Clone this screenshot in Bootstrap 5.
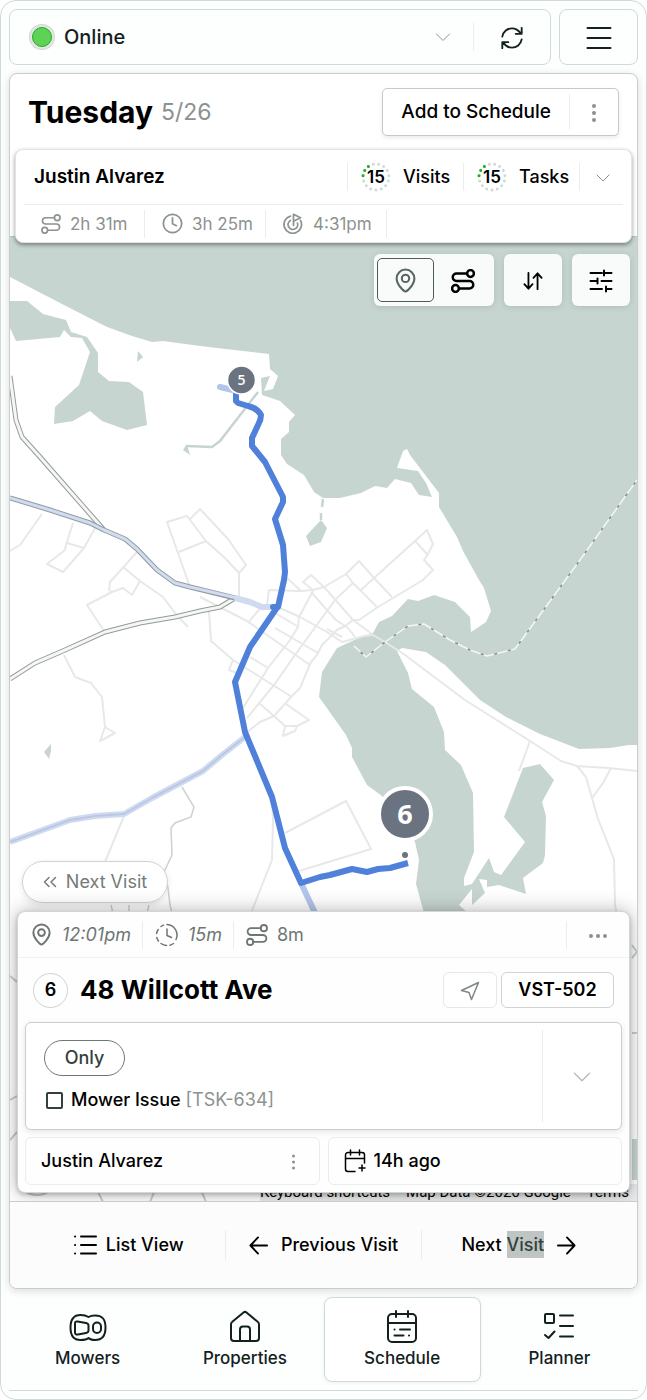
<!DOCTYPE html>
<html lang="en">
<head>
<meta charset="utf-8">
<meta name="viewport" content="width=device-width, initial-scale=1">
<title>Schedule</title>
<link href="https://cdn.jsdelivr.net/npm/bootstrap@5.3.0/dist/css/bootstrap.min.css" rel="stylesheet">
<style>
  :root { --ink: #13211d; --soft: #8b9290; --line: #ececec; --frame: #cddad6; --water: #c7d5d1; }
  body { font-family: Inter, "Liberation Sans", sans-serif; font-size: 18px; line-height: 24px; color: #000; background: #fff; }
  .shell { min-height: 100vh; border: 1px solid var(--frame); border-radius: 16px; background: #fdfefe; padding: 8px; gap: 8px; }
  svg.ic { fill: none; stroke: currentColor; stroke-width: 2; stroke-linecap: round; stroke-linejoin: round; flex: none; }
  .plain { background: none; border: 0; padding: 0; color: inherit; font-weight: 500; }
  .fw-mid { font-weight: 500; }
  .text-soft { color: var(--soft); }
  .vline { width: 1px; background: var(--line); align-self: center; height: 28px; flex: none; }

  .topbox { border: 1px solid var(--frame); border-radius: 8px; height: 56px; background: #fdfefe; color: var(--ink); }
  .status-dot { width: 20px; height: 20px; flex: none; margin: 0 12px 0 22px; border-radius: 50%; background: #5dd254; border: 1px solid #1fae1f; box-shadow: 0 0 0 2px #e4e6e6, 0 0 0 3px #d2d6d5; }
  .status-select { width: 0; border: 0; background-color: transparent; color: var(--ink); font-size: 20px; padding: 0 32px 0 0; box-shadow: none; height: 40px;
    background-position: right 22px center; background-size: 16px 16px;
    background-image: url("data:image/svg+xml,%3csvg xmlns='http://www.w3.org/2000/svg' viewBox='0 0 16 16'%3e%3cpath fill='none' stroke='%238b9290' stroke-linecap='round' stroke-linejoin='round' d='m1.500 5 6.500 6.500 6.500-6.500'/%3e%3c/svg%3e"); }
  .refresh { width: 76px; flex: none; }
  .menu-btn { width: 79px; flex: none; }

  .board { border: 1px solid #cacdcc; border-radius: 8px; background: #fff; box-shadow: 0 2px 8px rgba(0,0,0,.14); overflow: hidden; }
  .day-row { height: 75px; padding: 0 18px; }
  .day-name { font-size: 30px; line-height: 36px; font-weight: 700; }
  .day-date { font-size: 23px; line-height: 36px; }
  .add-split { border: 1px solid #c6c9c8; border-radius: 5px; height: 48px; box-shadow: 0 2px 4px rgba(0,0,0,.08); background: #fff; }
  .add-split .main { padding: 0 18px; font-size: 19px; }
  .add-split .more { width: 48px; }

  .crew { margin: 0 5px -7px; border: 1px solid #e2e4e3; border-radius: 8px; background: #fff; box-shadow: 0 2px 4px rgba(0,0,0,.4); position: relative; z-index: 2; }
  .crew-head { height: 54px; padding-left: 18px; }
  .crew-name { font-size: 19px; font-weight: 600; }
  .tally { width: 115px; padding-left: 13px; gap: 12px; }
  .tally svg text { font-size: 17px; font-weight: 600; }
  .crew-more { width: 51px; padding-right: 6px; }
  .crew-stats { height: 38px; border-top: 1px solid var(--line); margin: 0 8px; font-size: 17px; }
  .crew-stats > div { width: 121px; gap: 9px; padding-left: 17px; border-right: 1px solid var(--line); height: 28px; }

  .map { position: relative; background: #fff; border-top: 1px solid #b9c4c1; overflow: hidden; }
  .map-canvas, .map-credit { position: absolute; }
  .map-canvas { inset: 0; width: 100%; height: 100%; }
  .map-credit { right: 0; bottom: 0; height: 17px; font: 15px/17px Roboto, sans-serif; background: #e9ebea; padding-right: 8px; }
  .map-credit a { color: #000; text-decoration: none; }
  .map-tools, .map-sheet { position: relative; }
  .map-tools { padding: 17px 7px 0; gap: 10px; }
  .tool { height: 52px; min-width: 58px; border-radius: 6px; background: #f9fafa; box-shadow: 0 1px 6px rgba(0,0,0,.12); border: 0; color: #000; padding: 0; }
  .tool-set { padding: 4px 3px; }
  .tool-set button { width: 57px; height: 44px; border-radius: 5px; }
  .tool-set .on { border: 1px solid #4c5c57; color: #586762; }
  .tool-set .off svg { stroke-width: 2px; }

  .map-sheet { padding: 0 7px 8px; }
  .pill-next { height: 42px; border: 1px solid #cfd3d2; border-radius: 21px; background: #fffffff0; color: #737b78; width: 146px; margin: 0 0 8px 5px; gap: 9px; box-shadow: 0 2px 6px rgba(0,0,0,.1); font-weight: 400; }
  .visit { border: 1px solid #d3d6d5; border-radius: 8px; background: #fefefe; box-shadow: 0 0 20px rgba(0,0,0,.3), 0 2px 4px rgba(0,0,0,.2); }
  .visit-meta { height: 46px; border-bottom: 1px solid #f0f1f1; color: #6e7674; }
  .visit-meta .cell { height: 28px; padding: 0 11px 0 12px; gap: 9px; border-right: 1px solid var(--line); }
  .visit-meta .cell:last-of-type { gap: 7px; }
  .visit-more { width: 62px; }
  .visit-title { height: 64px; padding: 0 15px; }
  .num { width: 35px; height: 35px; border: 1px solid #cfd3d2; border-radius: 50%; font-weight: 600; }
  .addr { font-size: 26px; line-height: 32px; font-weight: 700; }
  .btn-box { height: 36px; border: 1px solid #e6e8e8; border-radius: 6px; background: #fff; }
  .btn-go { width: 54px; color: #7f8785; }
  .btn-code { width: 113px; border-color: #cfd3d2; font-weight: 600; }
  .tasks { margin: 0 7px; border: 1px solid #cbcecd; border-radius: 6px; background: #fff; box-shadow: 0 2px 6px rgba(0,0,0,.1); height: 108px; }
  .tasks-body { padding-left: 18px; }
  .only { border: 1px solid #6c7875; border-radius: 18px; width: 81px; height: 36px; color: #33413d; }
  .task-check { width: 17px; height: 17px; border: 2px solid #33413d; border-radius: 2px !important; margin: 0 0 0 2px; }
  .fold { width: 78px; color: #b4b9b8; }
  .minor { gap: 8px; margin: 7px; }
  .minor > * { height: 48px; border: 1px solid #ebecec; border-radius: 6px; padding: 0 15px; flex: 1 1 0; }

  .steps { height: 87px; border-top: 1px solid #c9cccb; background: #fcfcfc; padding: 0 21px; position: relative; }
  .steps > button { flex: 1 1 0; height: 30px; gap: 9px; }
  .steps > button + button { border-left: 1px solid var(--line); }
  .steps .hit { background: #bfc5c3; color: #33413d; padding: 3px 0; }

  .tabs { border-bottom: 1px solid var(--frame); padding-bottom: 8px; }
  .tabs a { flex: 1 1 0; height: 85px; color: var(--ink); text-decoration: none; font-size: 17px; font-weight: 500; border: 1px solid transparent; border-radius: 8px; padding-top: 11px; gap: 1px; }
  .tabs a.here { border-color: var(--frame); background: #fff; box-shadow: 0 1px 4px rgba(0,0,0,.06); }
</style>
</head>
<body>
<svg class="d-none" aria-hidden="true">
  <symbol id="route" viewBox="0 0 24 24"><circle cx="19.500" cy="4.500" r="3.400"/><circle cx="4.500" cy="19.500" r="3.400"/><path d="M16 4.500H5.500a3.750 3.750 0 0 0 0 7.500h13a3.750 3.750 0 0 1 0 7.500H8"/></symbol>
  <symbol id="pin" viewBox="0 0 24 24"><circle cx="12" cy="10" r="3.500"/><path d="M12 22.500c-1.500 0-8.500-6.500-8.500-12.500a8.500 8.500 0 0 1 17 0c0 6-7 12.500-8.500 12.500z"/></symbol>
  <symbol id="down" viewBox="0 0 16 16"><path d="m2 5 6 6 6-6"/></symbol>
</svg>

<div class="shell d-flex flex-column">
  <header class="d-flex gap-2">
    <div class="topbox flex-grow-1 d-flex align-items-center">
      <span class="status-dot"></span>
      <select class="form-select status-select flex-grow-1 fw-mid" aria-label="Connection status"><option>Online</option><option>Offline</option></select>
      <span class="vline"></span>
      <button class="plain refresh" aria-label="Refresh">
        <svg class="ic" width="24" height="24" viewBox="0 0 26 26"><path d="M2.500 11.500C3.500 6 8 2.500 13 2.500c4 0 7 2 9.500 5.500M23.500 2v6.500H17M23.500 14.500c-1 5.500-5.500 9-10.500 9-4 0-7-2-9.500-5.500M2.500 24v-6.500H9"/></svg>
      </button>
    </div>
    <button class="topbox menu-btn p-0" aria-label="Menu">
      <svg class="ic" width="26" height="24" viewBox="0 0 26 24"><path d="M1.500 2h23M1.500 12h23M1.500 22h23"/></svg>
    </button>
  </header>

  <main class="board flex-grow-1 d-flex flex-column">
    <div class="day-row d-flex align-items-center justify-content-between">
      <h1 class="m-0 d-flex align-items-center gap-2"><span class="day-name">Tuesday</span><span class="day-date text-soft fw-normal">5/26</span></h1>
      <div class="add-split d-flex">
        <button class="plain main">Add to Schedule</button>
        <span class="vline h-75"></span>
        <button class="plain more text-soft" aria-label="More options"><svg width="6" height="20" fill="currentColor"><circle cx="3" cy="3" r="2"/><circle cx="3" cy="10" r="2"/><circle cx="3" cy="17" r="2"/></svg></button>
      </div>
    </div>

    <section class="crew">
      <div class="crew-head d-flex align-items-center">
        <span class="crew-name me-auto">Justin Alvarez</span>
        <span class="vline"></span>
        <span class="tally d-flex align-items-center fw-mid">
          <svg width="30" height="30" viewBox="-15 -15 30 30"><g fill="none" stroke-width="3" stroke-linecap="round"><circle r="13" stroke="#d3d8d6" pathLength="15" stroke-dasharray="0 1" transform="rotate(-174)"/><circle r="13" stroke="#1fae1f" pathLength="15" stroke-dasharray="0 1 0 1 0 20" transform="rotate(-174)"/></g><text text-anchor="middle" y="6">15</text></svg>Visits</span>
        <span class="vline"></span>
        <span class="tally d-flex align-items-center fw-mid">
          <svg width="30" height="30" viewBox="-15 -15 30 30"><g fill="none" stroke-width="3" stroke-linecap="round"><circle r="13" stroke="#d3d8d6" pathLength="15" stroke-dasharray="0 1" transform="rotate(-174)"/><circle r="13" stroke="#1fae1f" pathLength="15" stroke-dasharray="0 1 0 1 0 20" transform="rotate(-174)"/></g><text text-anchor="middle" y="6">15</text></svg>Tasks</span>
        <span class="vline"></span>
        <button class="plain crew-more text-soft" aria-label="Expand crew"><svg class="ic" width="16" height="16" viewBox="0 0 16 16" style="stroke-width:1"><use href="#down"/></svg></button>
      </div>
      <div class="crew-stats d-flex align-items-center text-soft">
        <div class="d-flex align-items-center"><svg class="ic" width="20" height="20"><use href="#route"/></svg>2h 31m</div>
        <div class="d-flex align-items-center"><svg class="ic" width="21" height="21" viewBox="0 0 24 24"><circle cx="12" cy="12" r="10.500"/><path d="M12 5.500v6.800l4.500 2.200"/></svg>3h 25m</div>
        <div class="d-flex align-items-center"><svg class="ic" width="21" height="21" viewBox="0 0 24 24"><path d="M8.500 3.500a10 10 0 1 0 11.500 5M8.500 8.500a5.500 5.500 0 1 0 8 3M12 14V1.500l8 4-8 4"/></svg>4:31pm</div>
      </div>
    </section>

    <section class="map flex-grow-1 d-flex flex-column justify-content-between">
      <svg class="map-canvas" viewBox="10 236 627 966" preserveAspectRatio="xMidYMid slice" role="img" aria-label="Route map">
        <g fill="#c7d5d1">
          <path d="M10 236V277L62 304 107 327 132 336 152 342 163 341 200 346 269 354 270 369 278 376 273 389 264 391 268 381 270 376 261 378 262 395 280 401 295 415 289 422V432L281 439V455L287 464 304 475 314 492 323 498H340L361 493 375 486 387 488 395 479 411 483 419 495 432 497 426 483 418 471 397 468 403 451 407 449 410 455 439 493V507L457 537 463 551 479 580 484 588 491 611 486 622 471 632 470 617 455 602 434 595 418 601 408 599 392 616 379 622 373 633 363 636 337 648 322 672 319 697 346 735 352 748V757L367 785 382 796 415 842 419 860 416 884 424 913V925H468V913L459 905 472 889V905L485 893 479 879 487 880V887L499 885 526 894 523 878 543 863 545 855 546 816 542 802 554 780 540 764 523 768 504 817 525 842 501 875 494 872 489 858 472 884 464 886V878L474 852 473 793 461 765 445 750 444 732 434 707 412 689 408 673 397 651 402 648 426 652 445 665 480 700 506 717 540 734 579 749 610 748 629 745H637V236z"/>
          <path d="M10 301H27L43 314 66 320 71 332 87 337 98 353V372L109 381 129 382 143 392 147 425 127 430 102 421 90 411 73 421 54 424 55 407 79 385 90 352 82 338 71 337 64 330 60 337 16 341 10 328zM138 351 143 357 137 362zM183 450 190 455 188 448 186 445z"/>
          <path d="M321 520 327 528 321 542 310 546 306 536zM51 744V751L49 759 44 752z"/>
          <path d="M186 446 212 447 220 441 258 392M323 499 322 507M321 513 321 520" fill="none" stroke="#c7d5d1" stroke-width="2.500"/>
          <path d="M632 1139h5v41h-5z"/>
        </g>
        <g fill="none" stroke="#e7e8e8" stroke-width="2" stroke-linejoin="round">
          <path d="M42 514 20 545 10 551M73 523 66 545 65 550 47 564 63 572 84 548 95 528M67 543 84 548M137 552 110 582 109 590 112 592 87 605 104 631M112 592 123 588 132 595 140 581M123 567 140 581 163 597 175 613 188 627"/>
          <path d="M190 587 167 522 187 516 206 541 179 552M190 519 200 509 228 539 246 565 239 573 239 598M239 573 226 559 206 541M209 611 211 641 233 660 229 670 237 673"/>
          <path d="M267 605 269 590 300 591 313 590 324 587 346 574 359 561 374 578 392 597M287 578 300 590M313 590 303 582 311 575 325 588 353 620 372 634M313 591 299 617 298 627 290 640 268 668 243 708M248 623 262 606M200 597 247 621 310 665M280 608 300 617 327 632 342 642 364 636 373 635 385 642M275 613 297 626M275 628 318 653"/>
          <path d="M346 574 353 583 378 608M361 590 374 578 415 541 427 530 433 544 428 554 424 560 433 570 423 580 408 589 378 607 359 620H353L345 626 337 630 322 645 317 655 311 662 300 688 291 697 274 716 260 722 246 733M415 541 427 554M353 583 335 600 327 611 295 655 274 685 247 718M311 592 327 610 336 620 348 628 355 637M327 629 342 637M233 660 292 697M250 657 268 668M260 704 274 716 285 726 297 726 309 720 286 704M285 726 283 736 295 731 297 726"/>
          <path d="M64 655 75 677 91 683 102 697 105 727 100 741 115 733 105 727M124 816 105 862M272 797 273 820 272 860 251 913"/>
          <path d="M385 642 405 655 465 700 530 741 561 761 577 766 608 768 637 771M530 741 519 771M577 766 586 777 592 798 598 819 614 859 615 905 619 925M611 768 603 783 592 798M285 833 346 801 371 849 299 871"/>
          <path d="M10 976 17 982M10 1100 17 1096M10 1140 17 1132M632 945 637 952 632 958M632 1033H637M24 1190a15 10 0 0 0 26 0M97 1190 103 1202M155 1190 150 1202M201 1190 206 1202" stroke="#c8cecc"/>
        </g>
        <path d="M182 787 194 807 191 817 175 823 171 828 172 855 164 872 168 888 170 905 172 913M111 905 113 913M129 905V913M149 905 147 913" fill="none" stroke="#cfd1d1" stroke-width="1.500"/>
        <g fill="none" stroke-linejoin="round">
          <path d="M10 376 16 420 22 437 40 457 104 530M10 679 35 663 65 650 105 632 140 623 175 617 200 611 220 607 235 598" stroke="#939b98" stroke-width="5"/>
          <path d="M10 376 16 420 22 437 40 457 104 530M10 679 35 663 65 650 105 632 140 623 175 617 200 611 220 607 235 598" stroke="#f5f6f6" stroke-width="3"/>
          <path d="M10 498 50 510 90 523 104 530 125 539 137 549 157 570 175 583 190 587 235 598" stroke="#929ba3" stroke-width="5"/>
          <path d="M10 498 50 510 90 523 104 530 125 539 137 549 157 570 175 583 190 587 237 598" stroke="#d2dcf1" stroke-width="3"/>
          <path d="M235 598 250 602 262 607H273M10 842 70 820 95 816 124 814 152 798 203 771 222 755 245 737" stroke="#d0dbf1" stroke-width="6"/>
          <path d="M10 842 70 820 95 816 124 814 152 798 203 771 222 755 245 737" stroke="#bac8e4" stroke-width="2"/>
          <path d="M301 883 316 915M220 387 237 391" stroke="#b3c5ea" stroke-width="6" stroke-linecap="round"/>
          <path d="M354 646 366 657 385 642 408 626 424 624 450 640 470 650 487 656 515 649 580 560 637 480" stroke="#f4f6f5" stroke-width="1.500"/>
          <path d="M354 646 366 657 385 642 408 626 424 624 450 640 470 650 487 656 515 649 580 560 637 480" stroke="#858d8a" stroke-width="1.500" stroke-dasharray="3 11" stroke-dashoffset="-9"/>
          <path d="M236 393V401L238 403 248 406Q257 408 261 415 261 420 258 425L252 438V446L265 462 283 497V502L275 519 283 545 285 572 284 580 278 607H273L276 609 250 647 235 682 237 692 245 732 272 797 285 848 301 883 320 877 330 875 352 869 367 872 378 869 390 868 408 863" stroke="#4f80da" stroke-width="6"/>
        </g>
        <g font-family="Open Sans, sans-serif" text-anchor="middle" fill="#fff">
          <circle cx="241.500" cy="380" r="14" fill="#6b7280" stroke="#fff" stroke-width="1.500"/>
          <text x="241.500" y="385" font-size="14" font-weight="600">5</text>
          <circle cx="405" cy="814" r="26" fill="#6b7280" stroke="#fff" stroke-width="4"/>
          <text x="405" y="824" font-size="27" font-weight="700">6</text>
          <circle cx="405" cy="855" r="3" fill="#6b7280"/>
        </g>
      </svg>
      <div class="map-credit d-flex gap-3"><a href="#">Keyboard shortcuts</a><a href="#">Map Data ©2026 Google</a><a href="#">Terms</a></div>

      <div class="map-tools d-flex justify-content-end">
        <div class="tool tool-set d-flex">
          <button class="plain on" aria-label="Pins"><svg class="ic" width="25" height="25"><use href="#pin"/></svg></button>
          <button class="plain off" aria-label="Routes"><svg class="ic" width="24" height="24" style="stroke-width:2.500"><use href="#route"/></svg></button>
        </div>
        <button class="tool" aria-label="Sort"><svg class="ic" width="20" height="20" viewBox="0 0 22 22"><path d="M6 2v17M1.500 14.500 6 19.500l4.500-5M16 20V3M11.500 7.500 16 2.500l4.500 5"/></svg></button>
        <button class="tool" aria-label="Filters"><svg class="ic" width="24" height="24" viewBox="0 0 24 24"><path d="M1.500 4H13M15 1.500v5M15 4h7.500M1.500 12H7M8.500 9.500v5M12.500 12h10M1.500 20H13M17 17.500v5M17 20h5.500"/></svg></button>
      </div>

      <div class="map-sheet">
        <button class="pill-next d-flex align-items-center justify-content-center p-0"><svg class="ic" width="14" height="14" viewBox="0 0 14 14" style="stroke-width:1.500"><path d="M6 2.500 1.500 7 6 11.500M12.500 2.500 8 7l4.500 4.500"/></svg>Next Visit</button>
        <article class="visit">
          <div class="visit-meta d-flex align-items-center">
            <span class="cell d-flex align-items-center fst-italic"><svg class="ic" width="23" height="23"><use href="#pin"/></svg>12:01pm</span>
            <span class="cell d-flex align-items-center fst-italic"><svg class="ic" width="24" height="24" viewBox="0 0 24 24" style="stroke-width:1.500"><path d="M12 1.500a10.500 10.500 0 0 1 9 15M18.500 20.500a10.500 10.500 0 0 1-3.500 1.700M11.500 22.500a10 10 0 0 1-5.500-2M3.500 18a10 10 0 0 1-1.700-3.500M1.600 10.500a10 10 0 0 1 1.600-4M6 3.500a10 10 0 0 1 2.500-1.400M12 6v6.500l4.500 2"/></svg>15m</span>
            <span class="cell d-flex align-items-center border-0"><svg class="ic" width="22" height="22"><use href="#route"/></svg>8m</span>
            <span class="vline ms-auto"></span>
            <button class="plain visit-more text-soft" aria-label="Visit options"><svg width="20" height="6" fill="currentColor"><circle cx="3" cy="3" r="2"/><circle cx="10" cy="3" r="2"/><circle cx="17" cy="3" r="2"/></svg></button>
          </div>
          <div class="visit-title d-flex align-items-center">
            <span class="num d-flex align-items-center justify-content-center">6</span>
            <h2 class="addr my-0 ms-2 ps-1 me-auto">48 Willcott Ave</h2>
            <button class="btn-box btn-go p-0 me-1" aria-label="Navigate"><svg class="ic" width="20" height="20" viewBox="0 0 20 20" style="stroke-width:1.500"><path d="M18.500 1.500 1.500 9.500l7.500 2 2.500 7z"/></svg></button>
            <button class="btn-box btn-code p-0">VST-502</button>
          </div>
          <div class="tasks d-flex align-items-center">
            <div class="flex-grow-1 tasks-body">
              <div class="only d-flex align-items-center justify-content-center fw-mid">Only</div>
              <div class="d-flex align-items-center mt-2 pt-1 gap-2 fw-mid">
                <input class="form-check-input task-check" type="checkbox" id="t634">
                <label for="t634">Mower Issue <span class="text-soft fw-normal">[TSK-634]</span></label>
              </div>
            </div>
            <span class="vline" style="height:92px"></span>
            <button class="plain fold" aria-label="Expand tasks"><svg class="ic" width="20" height="20" viewBox="0 0 16 16" style="stroke-width:1"><use href="#down"/></svg></button>
          </div>
          <div class="minor d-flex fw-mid">
            <div class="d-flex align-items-center justify-content-between">Justin Alvarez<button class="plain text-soft px-2" aria-label="Assignee options"><svg width="5" height="18" fill="currentColor"><circle cx="2.500" cy="3" r="1.500"/><circle cx="2.500" cy="9" r="1.500"/><circle cx="2.500" cy="15" r="1.500"/></svg></button></div>
            <div class="d-flex align-items-center gap-2"><svg class="ic" width="22" height="24" viewBox="0 0 22 24" style="stroke-width:1.500"><path d="M11 22.500H4A2.500 2.500 0 0 1 1.500 20V6A2.500 2.500 0 0 1 4 3.500h14A2.500 2.500 0 0 1 20.500 6v8M1.500 9.500h19M6.500 1v5M15.500 1v5M18 16v6M15 19h6"/></svg>14h ago</div>
          </div>
        </article>
      </div>
    </section>

    <div class="steps d-flex align-items-center">
      <button class="plain d-flex align-items-center justify-content-center"><svg class="ic" width="24" height="20" viewBox="0 0 24 20"><path d="M8 1.500h15M8 10h15M8 18.500h15M2 1.500h.1M2 10h.1M2 18.500h.1"/></svg>List View</button>
      <button class="plain d-flex align-items-center justify-content-center"><svg class="ic me-1" width="19" height="19" viewBox="0 0 20 20"><path d="M19 10H2M9.500 1.500 1.500 10l8 8.500"/></svg>Previous Visit</button>
      <button class="plain d-flex align-items-center justify-content-center"><span>Next <span class="hit">Visit</span></span><svg class="ic ms-1" width="19" height="19" viewBox="0 0 20 20"><path d="M1 10h17M10.500 1.500l8 8.500-8 8.500"/></svg></button>
    </div>
  </main>

  <nav class="tabs d-flex">
    <a href="#" class="d-flex flex-column align-items-center"><svg class="ic" width="38" height="36" viewBox="0 0 38 36"><path d="M19.500 8C18 7 15.500 6 11.500 6 4.500 6 1.500 10 1.500 18.500s3 12.500 10 12.500c4 0 7-1 8-2 1.500 1.500 3 2 6.500 2 7.500 0 10.500-4 10.500-12.500S33.500 6.500 26 6.500c-3.500 0-5 .5-6.500 1.500z"/><path d="M8.500 12.500l8.500 1.500c1.800.3 2.500 1 2.500 2.500v5c0 1.500-.7 2.200-2.500 2.500l-8 1.500c-2 .4-3-.4-3-2V15c0-1.800.5-2.800 2.500-2.500z"/><rect x="24" y="13.500" width="8" height="10.500" rx="4"/></svg>Mowers</a>
    <a href="#" class="d-flex flex-column align-items-center"><svg class="ic" width="38" height="36" viewBox="0 0 38 36"><path d="M5 15.500c0-1.200.4-2 1.300-2.700L17.500 3.500c1-.8 2-.8 3 0l11.200 9.300c.9.700 1.300 1.500 1.300 2.700V29c0 2-1 3-3 3H8c-2 0-3-1-3-3zM14 32V20.500c0-2 1-3 3-3h4c2 0 3 1 3 3V32"/></svg>Properties</a>
    <a href="#" class="here d-flex flex-column align-items-center" aria-current="page"><svg class="ic" width="38" height="36" viewBox="0 0 38 36"><rect x="5" y="5" width="28" height="28" rx="4"/><path d="M5 14h28M13 2v6M25 2v6M11.500 20.500h.1M17 20.500h10M11.500 26.500h9M26 26.500h.1"/></svg>Schedule</a>
    <a href="#" class="d-flex flex-column align-items-center"><svg class="ic" width="38" height="36" viewBox="0 0 38 36"><rect x="5" y="5" width="9" height="9" rx="1"/><path d="M20 6.500h13M20 17h13M20 27.500h13M5 26l3.500 3 6-6.500"/></svg>Planner</a>
  </nav>
</div>
<script src="https://cdn.jsdelivr.net/npm/bootstrap@5.3.0/dist/js/bootstrap.bundle.min.js"></script>
</body>
</html>
